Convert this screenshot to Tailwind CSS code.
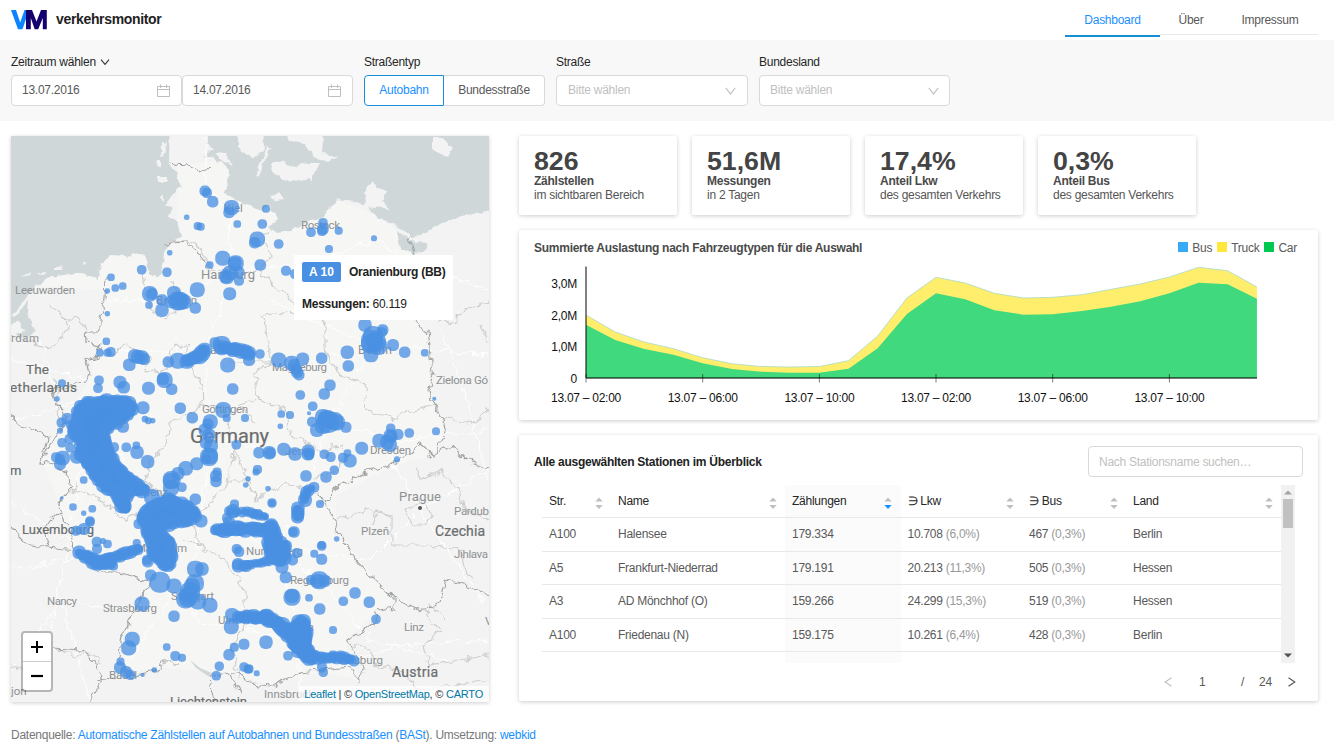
<!DOCTYPE html>
<html lang="de">
<head>
<meta charset="utf-8">
<title>verkehrsmonitor</title>
<script src="https://cdn.jsdelivr.net/npm/@tailwindcss/browser@4"></script>
</head>
<body class="bg-white w-[1334px] h-[750px] overflow-hidden font-['Liberation_Sans',Arial,sans-serif] text-[12px] tracking-[-0.26px] leading-[18px] text-[#595959]">

<header class="h-10 flex justify-between pl-[11px] pr-4">
  <div class="flex items-start">
    <svg class="mt-[10px]" width="36" height="20" viewBox="0 0 36 20">
      <path d="M0 0H5L9.2 12.5L13.5 0H18L11.5 19.3H7Z" fill="#0a84ff"/>
      <path d="M15 0H21L25.500 11.500L30 0H35.800V19.300H31.800V8L27.200 19.300H23.700L19.800 8V19.300H15Z" fill="#14006e"/>
    </svg>
    <h1 class="ml-[9px] mt-[9px] text-[14px] tracking-[-0.34px] leading-5 font-bold text-[#222]">verkehrsmonitor</h1>
  </div>
  <nav class="flex h-[37px] w-[253px] leading-[41px]">
    <a class="w-[95px] h-[37px] text-center text-[#1890ff] border-b-2 border-[#1890d8]">Dashboard</a>
    <a class="w-[62px] h-[35px] text-center border-b border-[#e8e8e8]">Über</a>
    <a class="w-[96px] h-[35px] text-center border-b border-[#e8e8e8]">Impressum</a>
  </nav>
</header>

<section class="h-[81px] bg-[#f8f8f8] pl-[11px] pt-[13px] flex">
  <div class="w-[353px]">
    <div class="flex items-center gap-1 text-[#262626] h-[18px]">Zeitraum wählen
      <svg width="10" height="10" viewBox="0 0 10 10" fill="none" stroke="#333" stroke-width="1.1"><path d="M1 2.6L5 7.4L9 2.6"/></svg>
    </div>
    <div class="flex mt-[4px]">
      <div class="w-[171px] h-[31px] bg-white border border-[#d9d9d9] rounded-[4px] flex items-center justify-between pl-[10px] pr-[11px]"><span class="-mt-px">13.07.2016</span>
        <svg width="13" height="13" viewBox="0 0 13 13" fill="none" stroke="#bfbfbf"><path d="M.5 2.5H12.5V12.5H.5ZM.5 5.5H12.5M3.5 .5V4M9.5 .5V4"/></svg>
      </div>
      <div class="w-[171px] h-[31px] bg-white border border-[#d9d9d9] rounded-[4px] flex items-center justify-between pl-[10px] pr-[11px]"><span class="-mt-px">14.07.2016</span>
        <svg width="13" height="13" viewBox="0 0 13 13" fill="none" stroke="#bfbfbf"><path d="M.5 2.5H12.5V12.5H.5ZM.5 5.5H12.5M3.5 .5V4M9.5 .5V4"/></svg>
      </div>
    </div>
  </div>
  <div class="w-[192px]">
    <div class="text-[#262626]">Straßentyp</div>
    <div class="flex mt-[4px] leading-[29px] text-center">
      <div class="w-[80px] h-[31px] bg-white border border-[#1890d8] rounded-l-[4px] text-[#1890ff]">Autobahn</div>
      <div class="w-[101px] h-[31px] bg-white border border-l-0 border-[#d9d9d9] rounded-r-[4px]">Bundesstraße</div>
    </div>
  </div>
  <div class="w-[203px]">
    <div class="text-[#262626]">Straße</div>
    <div class="mt-[4px] w-[192px] h-[31px] bg-white border border-[#d9d9d9] rounded-[4px] flex items-center justify-between pl-[11px] pr-[11px] text-[#bfbfbf]"><span class="-mt-px">Bitte wählen</span>
      <svg width="11" height="10" viewBox="0 0 11 10" fill="none" stroke="#bfbfbf" stroke-width="1.1"><path d="M.8 1.8L5.5 8L10.2 1.8"/></svg>
    </div>
  </div>
  <div>
    <div class="text-[#262626]">Bundesland</div>
    <div class="mt-[4px] w-[191px] h-[31px] bg-white border border-[#d9d9d9] rounded-[4px] flex items-center justify-between pl-[10px] pr-[10px] text-[#bfbfbf]"><span class="-mt-px">Bitte wählen</span>
      <svg width="11" height="10" viewBox="0 0 11 10" fill="none" stroke="#bfbfbf" stroke-width="1.1"><path d="M.8 1.8L5.5 8L10.2 1.8"/></svg>
    </div>
  </div>
</section>

<main class="flex gap-[30px] pl-[11px] pr-4 pt-[15px]">
  <!-- Karte -->
  <section class="relative w-[478px] h-[566px] shadow-[0_1px_4px_rgba(0,0,0,0.2)] overflow-hidden shrink-0">
    <svg class="block tracking-normal" width="478" height="566" viewBox="11 136 478 566" fill="none">
      <defs>
        <filter id="rough" filterUnits="userSpaceOnUse" x="-10" y="110" width="520" height="620" color-interpolation-filters="sRGB">
          <feTurbulence type="fractalNoise" baseFrequency="0.11" numOctaves="2" seed="4"/>
          <feDisplacementMap in="SourceGraphic" scale="11" xChannelSelector="R" yChannelSelector="G"/>
        </filter>
        <filter id="coast" filterUnits="userSpaceOnUse" x="-10" y="110" width="520" height="620" color-interpolation-filters="sRGB">
          <feTurbulence type="fractalNoise" baseFrequency="0.13" numOctaves="2" seed="9"/>
          <feDisplacementMap in="SourceGraphic" scale="6" xChannelSelector="R" yChannelSelector="G"/>
        </filter>
      </defs>
      <rect x="11" y="136" width="478" height="566" fill="#f2f3f2"/>
      <path d="M11 285L33 285L50 277L77 273L98 278L100 262L110 255L143 253L150 262L165 244L178 235L177 165L225 160L270 210L300 225L337 200L375 215L413 240L415 258L405 305L425 325L432 400L445 425L435 455L395 465L337 495L335 530L393 600L345 640L360 680L323 672L270 685L230 673L165 668L123 672L125 630L149 582L72 550L60 505L42 462L65 415L90 378L100 335L106 290Z" fill="#f6f6f5"/>
      <g filter="url(#coast)" fill="#d0d7d9">
        <path d="M0 115H170L169 162L176 173L181 187L171 195L166 205L173 208L168 216L178 222L182 236L172 241L166 248L164 262L161 272L157 278L150 273L148 263L143 253L128 256L110 255L101 264L98 278L77 273L50 277L35 287L28 300L27 312L36 330L27 334L18 322L0 325Z"/>
        <path d="M212 115L207 142L213 150L204 155L222 163L229 170L228 182L224 192L233 198L243 204L250 206L262 211L268 205L275 212L278 220L267 227L273 232L292 231L300 225L322 218L337 199L355 201L368 206L377 218L390 222L413 238L427 231L453 218L505 207V115Z"/>
        <path d="M397 231L406 237L416 242L428 243L426 251L414 254L400 249L399 242Z"/>
        <path d="M14 334L24 331L30 334L26 338Z"/>
      </g>
      <g filter="url(#coast)" fill="#f2f3f2">
        <path d="M238 115H263L264 150L253 158L247 155L238 148ZM267 146L270 148L259 176L257 173ZM273 163L283 160L290 167L307 163L320 163L313 176V185L311 179L290 183L272 173ZM275 115H325L322 153L337 157L327 162L315 157L303 143L290 140ZM363 193L373 181L376 189L387 190L383 202L390 210L377 207L366 206ZM433 136L441 138L452 147L447 157L433 150ZM271 196L279 193L284 200L276 201ZM216 152L226 153L232 165L221 160ZM162 141L166 142L164 157L161 156ZM156 160L160 160L160 167L155 166ZM158 177H166V182H158ZM160 197L164 196V201ZM83 262L87 262L84 265ZM54 268L62 266L61 270H54ZM35 273L45 271L44 274ZM19 277L32 272L31 275ZM11 316L34 289L36 291L14 318Z"/>
      </g>
      <g stroke="#fff" stroke-width="1" filter="url(#rough)">
        <path d="M205 136L207 190L230 210L228 290L205 350L209 450L190 590L195 620L300 640M240 270L300 265L380 240L400 260L489 290M107 300L160 300L228 275M270 300L370 345L489 355M110 350L220 350L300 365L370 345M375 345L330 420L300 500L275 550L300 630L300 690M330 420L390 440L489 430M100 430L160 510L170 600L130 660M210 440L330 455M275 550L190 520M275 550L320 580L370 640L450 660M420 510L370 560L275 550M420 510L489 470M420 510L489 610M11 500L90 555L160 560M11 570L90 555M11 420L90 400M40 340L80 470L50 640M62 600L130 610M62 600L11 670M62 600L90 700M460 380L489 480M440 330L460 380M380 440L420 510M11 360L90 380M489 640L400 645L355 660"/>
      </g>
      <g stroke="#cccdcd" stroke-width="1.1" filter="url(#rough)">
        <path d="M170 241L195 243L212 268L240 275L260 270L270 255L262 240L268 232M260 272L280 290L300 310L325 320L325 350L340 375L365 385L367 410L395 418L433 405M325 325L320 310L262 315L268 340L272 362L255 373L258 400L285 410L290 435L320 450L340 445L342 465L325 480M258 400L240 405L255 425M272 362L230 362M192 368L202 385L203 405L170 425L168 445L150 460L145 480L162 495L178 510M145 372L150 360L138 352L125 343L112 355M145 372L165 370L170 350L190 343L185 358L192 368M203 405L225 410L235 450L228 480L205 510L190 520L200 545L185 540M235 450L255 500L270 490L285 485L305 490L320 475M228 480L250 480L255 500M200 545L225 560L245 590L245 620L232 650L240 680M142 273L150 310L165 320L185 300L170 280M78 480L72 490L100 500L125 520L150 510M11 335L50 350L60 340L70 325L60 315L50 305M62 318L80 320L85 330M55 380L60 420M489 300L465 310L450 325L440 318M480 325L489 345M445 418L470 425L489 410M417 465L420 480L440 470L460 490L465 510L489 520M372 525L378 510L395 520M335 520L365 510L392 515L392 545L420 545L460 550L465 570L475 580M425 610L440 630L423 645L428 665L460 660L489 655M428 605L445 620M350 645L370 648L375 665L400 670L420 690L489 680M53 648L75 655L95 655L100 665M11 665L25 670M420 500L405 510L412 525L425 525L432 515L425 505"/>
      </g>
      <g stroke="#a0a3a3" stroke-width="1.1" filter="url(#rough)">
        <path d="M168 163L185 165L200 172L210 168M107 277L106 300L100 318L100 332L85 332L86 341L100 345L97 357L87 360L90 375L86 382L70 385L52 390L55 402L63 410L65 418L60 435L50 443L42 462L60 465L68 480L70 490L57 503L61 515L67 527L73 540L72 550L87 565L100 572L120 572L133 578L149 581L143 593L132 617L123 637L120 660L125 670L135 675L160 670L162 662L180 662M210 677L230 673L240 675L250 683L273 685L300 673L323 670L350 667L360 680L363 667L347 640L373 623L380 610L393 607L393 597L375 580L357 560L337 533L335 520L318 493L327 502L337 488L363 473L393 463L413 453L417 443L435 457L445 430L443 417L433 405L428 390L433 377L430 357L427 330L415 320L403 310L420 270L413 253L410 237"/>
        <path d="M440 452L453 445L467 460L495 470M393 597L405 603L417 609L433 607L440 600L445 580L467 585L495 598M5 411L20 425L33 430L47 437L42 462M5 522L22 537L30 545L50 547L72 550M60 510L50 520L43 530L50 547M53 648L80 650L97 665L103 680L90 702M120 675L97 680M165 244L185 242L200 255L210 270M210 677L215 700M230 673L240 695"/>
      </g>
      <path d="M190 660L200 668L216 675L208 676L196 668Z" fill="#d0d7d9"/>
      <g class="font-[Roboto,'Noto_Sans',sans-serif]" fill="#8e9192" font-size="11.5" stroke="none">
        <text x="15" y="294" textLength="60">Leeuwarden</text><text x="11" y="342" textLength="28">rdam</text>
        <text x="224" y="212">Kiel</text><text x="301" y="229" textLength="39">Rostock</text>
        <text x="201" y="279" font-size="13" textLength="54">Hamburg</text><text x="156" y="304" textLength="41">Bremen</text>
        <text x="358" y="354" font-size="12" textLength="34">Berlin</text><text x="272" y="371" textLength="55">Magdeburg</text>
        <text x="436" y="384" textLength="52">Zielona Gó</text><text x="202" y="413" textLength="46">Göttingen</text>
        <text x="202" y="354">Hanover</text><text x="285" y="455">Jena</text><text x="370" y="454" textLength="41">Dresden</text>
        <text x="399" y="501" font-size="13" textLength="42">Prague</text><text x="454" y="515" textLength="35">Pardub</text>
        <text x="361" y="535" textLength="28">Plzeň</text><text x="454" y="558" textLength="34">Jihlava</text>
        <text x="246" y="555" textLength="57">Nuremberg</text><text x="290" y="584" textLength="59">Regensburg</text>
        <text x="127" y="496">Koblenz</text><text x="136" y="552" textLength="51">Mannheim</text><text x="171" y="600" textLength="43">Stuttgart</text>
        <text x="47" y="605" textLength="30">Nancy</text><text x="103" y="612" textLength="54">Strasbourg</text><text x="218" y="624">Ulm</text>
        <text x="109" y="679" textLength="28">Basel</text><text x="404" y="631" textLength="20">Linz</text><text x="338" y="664" textLength="45">Salzburg</text>
        <text x="276" y="631">Munich</text><text x="264" y="698" textLength="50">Innsbruck</text><text x="11" y="695">jon</text><text x="485" y="625">V</text>
        <circle cx="420" cy="508" r="2" fill="#555"/>
      </g>
      <g class="font-[Roboto,'Noto_Sans',sans-serif]" fill="#6b6d6e" stroke="#6b6d6e" stroke-width=".2" font-size="13">
        <text x="26" y="374" font-size="13.500" textLength="23">The</text><text x="10" y="392" font-size="13.500" textLength="67">etherlands</text>
        <text x="190" y="443" font-size="20" textLength="79">Germany</text><text x="10" y="475" font-size="13">m</text>
        <text x="22" y="534" textLength="72">Luxembourg</text><text x="435" y="536" font-size="14" textLength="50">Czechia</text>
        <text x="392" y="677" font-size="14" textLength="46">Austria</text><text x="170" y="706" textLength="77">Liechtenstein</text>
      </g>
      <g id="clusters" fill="#468fe1" stroke="#468fe1" stroke-linejoin="round" stroke-linecap="round">
        <path stroke-width="9" d="M78 411L85 405L103 401L127 402L132 408L127 415L112 424L104 430L107 447L113 463L124 476L137 485L145 490L131 490L124 499L126 509L123 508L119 501L114 490L105 487L98 478L91 467L81 456L80 450L83 442L74 433L74 429L78 422Z"/>
        <path stroke-width="9" d="M142 517L152 507L168 499L180 504L193 511L196 515L186 521L170 522L154 528L163 537L170 541L170 556L170 564L166 566L159 559L153 553L153 541L147 532L149 525L142 519Z"/>
        <path stroke-width="8" d="M271 525L273 525L277 542L285 545L285 557L282 561L271 558L268 542Z"/>
        <path stroke-width="9" d="M289 633L294 626L299 622L305 623L307 635L306 648L312 655L313 659L307 658L294 646Z"/>
        <g fill="none">
          <path stroke-width="11" d="M187 361L199 356L204 350"/><path stroke-width="11" d="M88 557L97 563L110 561"/><path stroke-width="10" d="M218 530L244 529L268 530"/>
          <path stroke-width="10" d="M222 348L240 350L250 354"/><path stroke-width="8" d="M79 553L87 558"/><path stroke-width="12" d="M266 618L278 623L289 634"/>
          <path stroke-width="8" d="M110 559L122 554L139 549"/><path stroke-width="5" d="M229 512L246 512L266 517"/><path stroke-width="6" d="M244 566L258 563L275 559"/>
          <path stroke-width="8" d="M308 654L320 658L338 657L350 659"/><path stroke-width="9" d="M240 617L265 617"/><path stroke-width="8" d="M297.500 509V517"/><path stroke-width="6" d="M304 500L306 492L312 488"/>
        </g>
      </g>
      <g id="stations" fill="#4a90e2" fill-opacity=".77"></g>
    </svg>

    <div class="absolute left-[283px] top-[119px] w-[159px] h-[65px] bg-white pl-2 pt-[7px] text-[#222]">
      <div class="flex items-center"><span class="w-[39px] h-5 rounded-[2px] bg-[#4a90e2] text-white tracking-normal font-bold text-center leading-[21px]">A 10</span><b class="ml-2">Oranienburg (BB)</b></div>
      <div class="mt-[13px]"><b>Messungen:</b> 60.119</div>
    </div>

    <div class="absolute left-[10px] top-[495px] w-[32px] h-[61px] rounded-[4px] border-2 border-black/25 bg-white bg-clip-padding flex flex-col">
      <div class="h-[29px] border-b border-[#ccc] grid place-items-center"><svg width="12" height="12" stroke="#000" stroke-width="2"><path d="M0 6H12M6 0V12"/></svg></div>
      <div class="h-[28px] grid place-items-center"><svg width="12" height="12" stroke="#000" stroke-width="2.2"><path d="M0 6H12"/></svg></div>
    </div>
    <div class="absolute right-0 bottom-0 h-4 bg-white/70 pl-[5px] pr-[6px] text-[11px] tracking-[-0.22px] leading-[16px] text-[#333] whitespace-nowrap"><span class="text-[#0078a8]">Leaflet</span> | © <span class="text-[#0078a8]">OpenStreetMap</span>, © <span class="text-[#0078a8]">CARTO</span></div>
  </section>

  <div class="w-[799px] flex flex-col gap-[15px] shrink-0">
    <!-- Kennzahlen -->
    <div class="flex gap-[15px] h-[79px] text-[#555]">
      <div class="w-[158px] rounded-[2px] shadow-[0_1px_4px_rgba(0,0,0,0.2)] pl-[15px] pt-[11px] leading-[14px]"><div class="text-[26.7px] tracking-normal leading-[29px] font-bold text-[#444]">826</div><b class="block mt-[-2px] text-[#4a4a4a]">Zählstellen</b>im sichtbaren Bereich</div>
      <div class="w-[158px] rounded-[2px] shadow-[0_1px_4px_rgba(0,0,0,0.2)] pl-[15px] pt-[11px] leading-[14px]"><div class="text-[26.7px] tracking-normal leading-[29px] font-bold text-[#444]">51,6M</div><b class="block mt-[-2px] text-[#4a4a4a]">Messungen</b>in 2 Tagen</div>
      <div class="w-[158px] rounded-[2px] shadow-[0_1px_4px_rgba(0,0,0,0.2)] pl-[15px] pt-[11px] leading-[14px]"><div class="text-[26.7px] tracking-normal leading-[29px] font-bold text-[#444]">17,4%</div><b class="block mt-[-2px] text-[#4a4a4a]">Anteil Lkw</b>des gesamten Verkehrs</div>
      <div class="w-[158px] rounded-[2px] shadow-[0_1px_4px_rgba(0,0,0,0.2)] pl-[15px] pt-[11px] leading-[14px]"><div class="text-[26.7px] tracking-normal leading-[29px] font-bold text-[#444]">0,3%</div><b class="block mt-[-2px] text-[#4a4a4a]">Anteil Bus</b>des gesamten Verkehrs</div>
    </div>

    <!-- Diagramm -->
    <section class="h-[190px] rounded-[2px] shadow-[0_1px_4px_rgba(0,0,0,0.2)]">
      <div class="h-[34px] flex justify-between items-center pl-[15px] pr-[21px] pt-[2px]">
        <b class="text-[#4a4a4a]">Summierte Auslastung nach Fahrzeugtypen für die Auswahl</b>
        <div class="flex items-center gap-[4.500px]"><i class="size-[10px] -mt-[2px] bg-[#36aaf5]"></i>Bus<i class="size-[10px] -mt-[2px] bg-[#ffe83b]"></i>Truck<i class="size-[10px] -mt-[2px] bg-[#00c853]"></i>Car</div>
      </div>
      <svg class="block" width="799" height="156" viewBox="519 264 799 156">
        <path id="top" fill="#ffee6b"/><path id="line" fill="none" stroke="#a9d9c8" stroke-width=".8"/><path id="car" fill="#40d97e"/>
        <path d="M586 266.500V378M586 378H1257" stroke="#000" stroke-opacity=".7" stroke-width="1.4" fill="none"/>
        <path d="M586 374V382.500M702.700 374V382.500M819.400 374V382.500M936 374V382.500M1052.700 374V382.500M1169.400 374V382.500" stroke="#000" stroke-opacity=".5"/>
        <g font-size="12" fill="#111" text-anchor="end"><text x="577" y="288">3,0M</text><text x="577" y="320">2,0M</text><text x="577" y="351">1,0M</text><text x="577" y="383">0</text></g>
        <g font-size="12" fill="#111" text-anchor="middle"><text x="586" y="402">13.07 – 02:00</text><text x="702.700" y="402">13.07 – 06:00</text><text x="819.400" y="402">13.07 – 10:00</text><text x="936" y="402">13.07 – 02:00</text><text x="1052.700" y="402">13.07 – 06:00</text><text x="1169.400" y="402">13.07 – 10:00</text></g>
      </svg>
    </section>

    <!-- Tabelle -->
    <section class="h-[266px] rounded-[2px] shadow-[0_1px_4px_rgba(0,0,0,0.2)] px-[15px] pt-[11px]">
      <div class="flex justify-between items-center h-[31px]">
        <b class="text-[#222]">Alle ausgewählten Stationen im Überblick</b>
        <div class="w-[215px] h-[31px] border border-[#d9d9d9] rounded-[4px] px-[10px] leading-[30px] text-[#bfbfbf]">Nach Stationsname suchen…</div>
      </div>
      <div class="flex mt-2 ml-2 h-[178px]">
        <div id="table" class="w-[739px] grid grid-cols-[69px_174px_115.500px_121.500px_104px_155px] grid-rows-[33px_33.5px_33.5px_33.5px_33.5px_11px]"></div>
        <div class="w-[14px] bg-[#f1f1f1] flex flex-col items-center pt-[5px] pb-[5px]">
          <svg width="8" height="5"><path d="M0 4.500L4 .5L8 4.500Z" fill="#a3a3a3"/></svg>
          <div class="mt-1 w-[10px] h-[29px] bg-[#c1c1c1]"></div>
          <svg class="mt-auto" width="8" height="5"><path d="M0 .5L4 4.500L8 .5Z" fill="#505050"/></svg>
        </div>
      </div>
      <div class="flex items-center h-[36px] pl-[630px] pt-[2px]">
        <svg width="8" height="10" fill="none" stroke="#bfbfbf" stroke-width="1.1"><path d="M7.500 .8L1.200 5L7.500 9.200"/></svg>
        <span class="ml-[27px] w-[42px]">1</span><span class="w-[13px]">/</span><span class="w-[23px] text-center">24</span>
        <svg class="ml-[11px]" width="8" height="10" fill="none" stroke="#555" stroke-width="1.1"><path d="M.5 .8L6.800 5L.5 9.200"/></svg>
      </div>
    </section>
  </div>
</main>

<footer class="pl-[11px] mt-6 text-[#777]">Datenquelle: <span class="text-[#1890ff]">Automatische Zählstellen auf Autobahnen und Bundesstraßen</span> (<span class="text-[#1890ff]">BASt</span>). Umsetzung: <span class="text-[#1890ff]">webkid</span></footer>

<script>
// Zählstellen: x, y, Radius
const stations = `205,191,5.5 207,193,5 212.7,201.7,5.7 231.5,207.500,7.6 229,212.5,5.7 186.7,217.3,2.8 197.7,226,4 200.7,226.7,4 237.3,224,3.8 169.7,252.7,2.8 141.7,269.7,4.8 111,277.3,3.8 115.3,288,3.8 122.7,286,3.8 107.3,291,2.8 107.3,313.7,2.8 167,272.3,4.7 209.7,265,3.8 222.7,258.3,7.5 235.7,263.3,8 235,263,6.500 226.7,276.7,7.5 230,273,7.5 226,277,6 239,272,5.5 239,280.7,5 229.7,293.7,6.5 197.3,289.7,7.5 195.3,308,5.7 149.7,293.7,7.7 152,294,5.7 149,305,3.8 162,310.3,6.7 162,300,5.7 174,293,7 171.7,301.7,6.500 178,301,9.5 180,301,9 184,301.7,7.5
266,208.7,4 262.3,224,4.8 257.3,239.3,7.7 254.7,242.7,5.7 278.7,244,4.8 260.3,265,5.8 286,270.7,5 295,274,5 311,232.3,4.8 323,222.7,4.7 323,229,5.7 322,231,5 338.7,230.7,4 329,249,4 374,238.3,3 365,325,6.7 382.7,330,5.700
106.3,341.3,3.8 100,352.7,3.8 107.5,352.7,4 110.7,352,5 129.3,364.7,6.3 135,356,7 138,357,7 141.7,357.3,7 144,359,6 168.3,362,5.7 178,360.7,8 215,342.7,5.5 221.7,345,9 227.7,365,7.5 232.7,389,5.7 99,380.3,4.8 98,388.3,4.8 120,382.3,6.5 123.7,387.3,6.3 148.5,388.3,6.5 164.7,380,8 163,379,6 171.7,389.3,5.7 62,383.3,4 57,399,2.8 87,401.7,5.7 143,407.7,6.5 180.3,408.3,5.7 192.3,417.7,5.7 223.3,410,8 226.7,418,4 245,418,4 210.3,421.7,7.5 205,430,6.500 209,435,6.500 208,424,5.500 206,443,6 211,446,7 209,457,9 210,456,8 206,459,5 216,476,6 216,481.5,5.7 217,472,4.5 236.3,444.7,4.8 196.7,463.7,6.5 185.7,468.3,7.3 178,473.5,6.5 171.7,480,9 171,481,8 171,488,8 182,487.3,4.7 195.3,499.3,5.7 147.7,461.7,6.7 137,452.3,6.7 136.3,445.3,3.8 126.3,447.3,4.8 114,447.3,5 123,426.7,6 145,419,3.3 148.3,420.7,3.5 152.7,420.7,2.8 61.5,422.5,5 67.3,418.7,5.7 60,430.7,3 62,442.7,4.7 70,447.7,4.7 69.5,439,5 56,457.3,5 62.7,458,7.3 60,464,6 60,459,5 77,456.7,7 83.7,480,3.8 73,507,3.8 92.3,508.7,3.8 83.7,513.3,2.7 61.7,498,1.8 90,521,4.7 152,497,8 71,425,5 80,406,6
138.5,524,5 168,523,9 201,521,6.5 147.7,561.7,5.7 147,560,5 150.7,575.3,5.7 160,582.3,10.5 174,586,7.5 195.3,569,8.3 202,569,6.7 195,583.3,9 192,586,8 190,592,10 189,595,9 185.7,599,9.5 188,598,9 198,601.5,8 210,605.3,7.5 174,616.3,5.7 142,604,7.5 132.3,639.3,7.5 128.7,648,7.5 120.5,661.5,4 120,667.5,6 126,672,6 130.5,675,5 142.7,675,2 154.3,670,2.8 166.7,647,3.8 175.3,656,5 182,657.7,4 232,615,7 231.3,626.7,7.5 238.3,617.3,6.5 246,618.3,6 234.3,647.3,4.5 244,644.3,5.5 229,654.7,5.7 219.3,666.3,4.7 216.3,675.7,4.7 244,667,4.7 248,669,4.500 236.7,549,5 239,551.7,5.3 238.3,566,6.5 238,564,6 246,566,6 233,511,7 234.5,504,4.5 227,518,5 229,522,6 215,530,5 76,530.7,5 84,529,6 90,522,4.8 96.7,541.7,5 107.5,544,4.3 103,541,3 113.5,566,4.5 136.7,543,4 97,549,5 245.7,485,2.8 248,479,2.8
249,360,6 260,354,4.7 278.7,360,7.5 291.7,363.3,7.5 294,365,6 302.7,359,6.5 296,369,6 297,372,6 299,375,5.5 321.7,358.3,5.7 347.3,352.3,6.7 348.3,366,5.7 373,336,10 372,341,11 376,342,10 370,344,9 371,355,7.3 393,345,6 378,346,9 382,332,5 404.7,352.3,5.7 424.7,352.7,3.8 330,385.3,5.7 324.3,394,5.7 300.3,395,4.8 312.7,406.3,4.8 309,413.3,2 281.3,414,3.8 290,415,4 280.3,426.3,2.8 312,421.7,5 323,417,8 328,422,11 327,419,9 334,421,9 337,422.5,8 323,426,8 317,430,7 346,427.3,5.5 434.3,398.7,2 390.7,428.3,4.7 390.5,436,7 391,437,6 398,434.5,5.5 379.3,440.7,7 387,442,7 390,445,7 409.3,433,4.8 436,431.3,4 397,459.3,3 361.7,448.3,6.5 350,460.7,6.7 343,457.7,5 347.5,453,3.8 330.7,457,5 324.3,454.3,4.8 308.3,451,6.500 308,454,6.5 309,455,5 295,454,6.7 283.7,449.3,6.5 269.3,452.7,6.7 270,453,5.5 259,452.7,5.7 257.5,469.5,4.5 256,472,3.5 268,488.7,2.8 272,503,4.7 272,503,3.5 306,476,5.7 326,477,5.7 334.3,470.3,4.7 314,487.3,5.3 320,504,4 305,500,7 297.7,512,6.5
258,514,5 256,530,6 297.5,517,6.5 294,532,5.7 293,532,4.5 321.7,546,4.8 321.7,545,4 321.7,559.3,5.5 314.3,553.7,4 336.7,539,2.8 297,553,5 286,546,6 292.5,560,5.5 282,567,6.500 285.7,577.3,6 311,580,5 319.3,580.3,9 318,581,7 325,580.7,6 292,597.3,8.5 292,596,7 309,597.7,3.8 319.7,609,5.7 343.3,601.3,4.8 355,593,5.7 369.3,602.3,5.7 376,619.3,4.8 333,630,4 266,642.3,6.7 288,655.7,4.8 323.3,672.3,4.7 322,667,5 256.7,673.3,3 249,669,4.500 255,618,6.500 266,617,7.5 303,622,8 354,661,5.500 333,656,5.500`;
const points = stations.split(/\s+/).map(s => s.split(',').map(Number));
// Dichte Ballungsräume: Stationen entlang der Umrisse und Autobahnachsen
let seed = 7;
const rnd = () => (seed = (seed * 16807) % 2147483647) / 2147483647;
document.querySelectorAll('#clusters path').forEach(p => {
  const w = Number(p.getAttribute('stroke-width')), len = p.getTotalLength();
  for (let d = 0; d <= len; d += 2.5 + rnd() * 2) {
    const q = p.getPointAtLength(d);
    points.push([q.x + (rnd() - .5) * 2, q.y + (rnd() - .5) * 2, w / 2 + 1 + rnd() * 2]);
  }
});
document.getElementById('stations').innerHTML = points.map(([x, y, r]) =>
  `<rect x="${x - r}" y="${y - r}" width="${2 * r}" height="${2 * r}" rx="${r * 0.88}"/>`
).join('');

// Stundenwerte des Flächendiagramms
const car = [324.7,340,349,354.7,363.3,369,371.7,372.7,372.7,368.7,348.3,314,293.3,299.3,310.3,314.7,314.3,311,306.7,301.3,293.3,282.7,284.3,298.7];
const total = [315,332,342,348.7,357.7,363.7,366.5,367,366.5,360.7,336,298,277.3,283,293.3,298,297.3,294.7,289.3,284,277,267.3,270.7,287];
const line = a => 'M' + a.map((y, i) => (586 + i * 29.17).toFixed(1) + ' ' + y).join('L');
document.getElementById('top').setAttribute('d', line(total) + 'V378H586Z');
document.getElementById('line').setAttribute('d', line(total));
document.getElementById('car').setAttribute('d', line(car) + 'V378H586Z');

const heads = ['Str.', 'Name', 'Zählungen', '∋ Lkw', '∋ Bus', 'Land'];
const rows = [
  ['A100', 'Halensee', '179.334', '10.708 (6,0%)', '467 (0,3%)', 'Berlin'],
  ['A5', 'Frankfurt-Niederrad', '179.191', '20.213 (11,3%)', '505 (0,3%)', 'Hessen'],
  ['A3', 'AD Mönchhof (O)', '159.266', '24.299 (15,3%)', '519 (0,3%)', 'Hessen'],
  ['A100', 'Friedenau (N)', '159.175', '10.261 (6,4%)', '428 (0,3%)', 'Berlin']
];
let html = heads.map((h, i) => `<div class="flex items-center justify-between pl-[7px] pr-[8.5px] border-b border-[#e8e8e8] text-[#262626] ${i === 2 ? 'bg-[#fbfbfb]' : ''}"><span>${h}</span><svg class="mt-[3px]" width="8" height="12"><path d="M.3 4.500L4 .5L7.700 4.500Z" fill="#bfbfbf"/><path d="M.3 8L4 12L7.700 8Z" fill="${i === 2 ? '#1890ff' : '#bfbfbf'}"/></svg></div>`).join('');
rows.forEach(r => r.forEach((c, i) => {
  const t = i === 3 || i === 4 ? c.replace(/(\(.*\))/, '<span class="text-[#999]">$1</span>') : c;
  html += `<div class="pl-[7px] leading-[33px] border-b border-[#e8e8e8] whitespace-nowrap ${i === 2 ? 'bg-[#fbfbfb]' : ''}">${t}</div>`;
}));
html += '<div></div><div></div><div class="bg-[#fbfbfb]"></div>';
document.getElementById('table').innerHTML = html;
</script>
</body>
</html>
